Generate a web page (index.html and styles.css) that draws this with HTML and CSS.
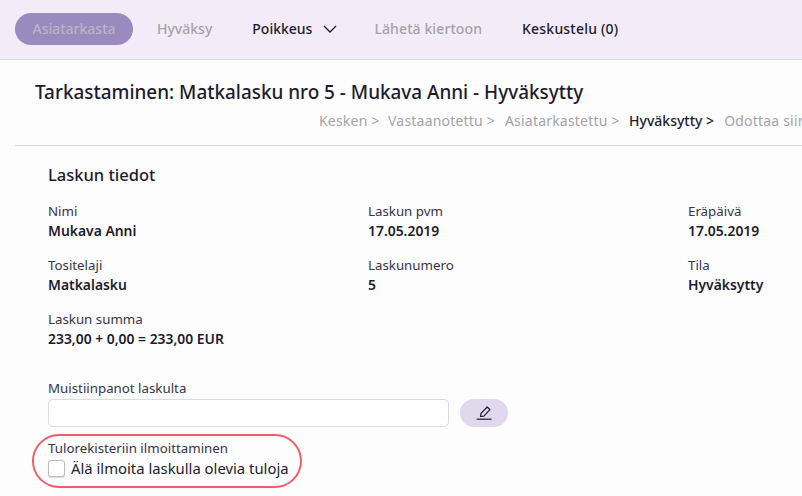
FILE: index.html
```html
<!DOCTYPE html>
<html lang="fi">
<head>
<meta charset="utf-8">
<title>Tarkastaminen</title>
<link rel="stylesheet" href="styles.css">
</head>
<body>
<nav class="toolbar">
  <span class="btn-primary">Asiatarkasta</span>
  <span class="tool muted hyvaksy">Hyväksy</span>
  <span class="tool poikkeus">Poikkeus
    <svg class="chev" width="14" height="8" viewBox="0 0 14 8"><path d="M1 1l6 6 6-6" fill="none" stroke="#1c1b2e" stroke-width="1.3"/></svg>
  </span>
  <span class="tool muted laheta">Lähetä kiertoon</span>
  <span class="tool">Keskustelu (0)</span>
</nav>
<header class="head">
  <h1 class="title">Tarkastaminen: Matkalasku nro 5 - Mukava Anni - Hyväksytty</h1>
  <div class="crumbs">
    <span>Kesken &gt;</span><span>Vastaanotettu &gt;</span><span>Asiatarkastettu &gt;</span><span class="current">Hyväksytty &gt;</span><span>Odottaa siirtoa &gt;</span>
  </div>
</header>
<main class="content">
  <h2 class="section">Laskun tiedot</h2>
  <div class="grid">
    <div class="field"><div class="label">Nimi</div><div class="value">Mukava Anni</div></div>
    <div class="field"><div class="label">Laskun pvm</div><div class="value">17.05.2019</div></div>
    <div class="field"><div class="label">Eräpäivä</div><div class="value">17.05.2019</div></div>
    <div class="field"><div class="label">Tositelaji</div><div class="value">Matkalasku</div></div>
    <div class="field"><div class="label">Laskunumero</div><div class="value">5</div></div>
    <div class="field"><div class="label">Tila</div><div class="value">Hyväksytty</div></div>
    <div class="field"><div class="label">Laskun summa</div><div class="value">233,00 + 0,00 = 233,00 EUR</div></div>
  </div>
  <div class="notes">
    <div class="label">Muistiinpanot laskulta</div>
    <div class="notes-row">
      <div class="input"></div>
      <span class="edit">
        <svg width="16" height="16" viewBox="0 0 16 16"><path d="M4.6 11.4l.4-3 6.2-6.4 2.8 2.7-6.2 6.4z" fill="none" stroke="#1c1b2e" stroke-width="1.2" stroke-linejoin="round"/><path d="M.6 14.2h15" stroke="#1c1b2e" stroke-width="1.2"/></svg>
      </span>
    </div>
  </div>
  <div class="income">
    <div class="label">Tulorekisteriin ilmoittaminen</div>
    <label class="check"><span class="box"></span><span>Älä ilmoita laskulla olevia tuloja</span></label>
    <span class="ring"></span>
  </div>
</main>
</body>
</html>
```

FILE: styles.css
```css
* { box-sizing: border-box; }
html, body { margin: 0; height: 100%; }
body {
  width: 802px; height: 496px; overflow: hidden;
  background: #fdfdfd; color: #1c1b2e;
  font-family: "Noto Sans", "Liberation Sans", sans-serif;
  font-size: 14px;
}
.toolbar {
  height: 60px; background: #f3ebf8; border-bottom: 1px solid #d9d6de;
  display: flex; align-items: center; padding: 0 0 2px 15px;
  font-weight: 500; white-space: nowrap;
}
.btn-primary {
  width: 118px; height: 32px; border-radius: 16px; background: #9a8abd; color: #b9b4c5;
  display: flex; align-items: center; justify-content: center;
}
.tool { display: inline-flex; align-items: center; }
.muted { color: #a5a2a9; }
.hyvaksy { margin-left: 24px; }
.poikkeus { margin-left: 40px; }
.chev { margin-left: 11px; }
.laheta { margin-left: 37px; letter-spacing: .1px; }
.laheta + .tool { margin-left: 40px; letter-spacing: .2px; }
.head { margin-left: 15px; height: 86px; border-bottom: 1px solid #d6d5d8; padding-left: 20px; }
.title { margin: 0; padding-top: 20px; font-size: 18.9px; line-height: 24px; font-weight: 500; white-space: nowrap; }
.crumbs {
  display: flex; gap: 10px; margin-left: 284px; margin-top: 7px; overflow: hidden;
  line-height: 20px; white-space: nowrap; color: #a5a2a9; letter-spacing: .2px;
}
.crumbs span:first-child { margin-right: -1.5px; }
.current { color: #1c1b2e; font-weight: 500; letter-spacing: 0; margin-left: -.5px; }
.content { padding: 17px 0 0 48px; }
.section { margin: 0; font-size: 16.5px; line-height: 24px; font-weight: 500; }
.grid { display: grid; grid-template-columns: repeat(3, 320px); row-gap: 14px; margin-top: 14px; overflow: hidden; width: 754px; }
.field { height: 40px; }
.label { font-size: 13.3px; line-height: 20px; color: #35344a; }
.value { font-size: 13.9px; line-height: 20px; font-weight: 600; }
.notes { margin-top: 29px; }
.notes-row { display: flex; align-items: center; gap: 11px; margin-top: 1px; }
.input { width: 401px; height: 28px; background: #fff; border: 1px solid #dcdbdf; border-radius: 5px; }
.edit {
  width: 48px; height: 28px; border-radius: 14px; background: #e0d8ec;
  display: flex; align-items: center; justify-content: center;
}
.income { position: relative; margin-top: 11px; }
.check { display: flex; align-items: center; gap: 6px; font-size: 14.85px; line-height: 20px; }
.box { width: 17px; height: 17px; background: #fff; border: 1px solid #bdbbc2; border-radius: 3px; box-shadow: 0 1px 1px rgba(0,0,0,.15); }
.ring {
  position: absolute; left: -16px; top: -4px; width: 270px; height: 54px;
  border: 2px solid #ec5f67; border-radius: 27px;
}
```
